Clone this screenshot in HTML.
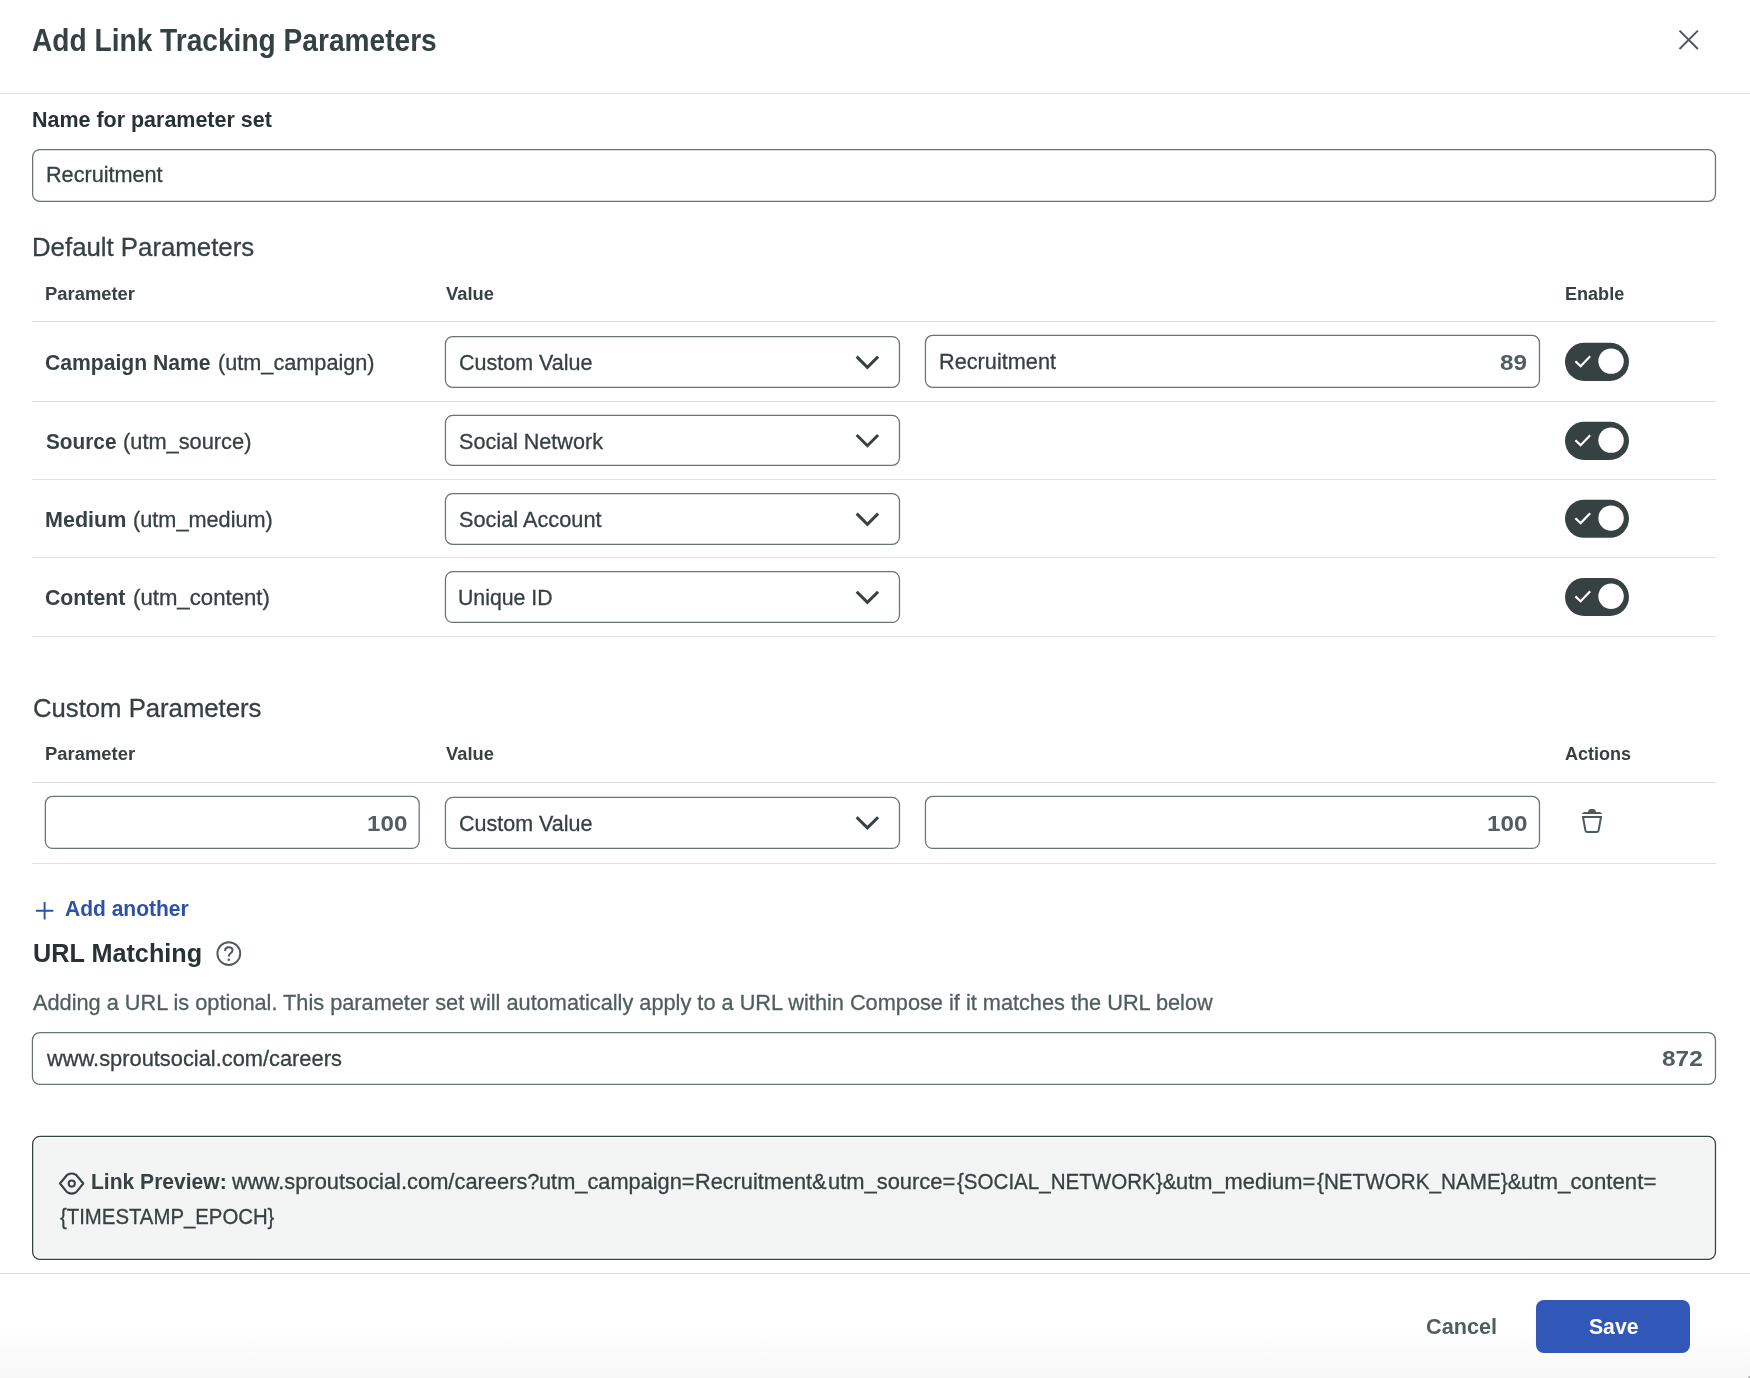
<!DOCTYPE html>
<html><head><meta charset="utf-8"><title>Add Link Tracking Parameters</title>
<style>
html,body{margin:0;padding:0;}
html{width:1750px;height:1378px;overflow:hidden;background:#fff;}
body{width:1750px;height:1378px;position:relative;overflow:hidden;background:#fff;font-family:"Liberation Sans",sans-serif;}
.w{position:absolute;left:0;top:0;width:1750px;height:1378px;will-change:transform;}
.t{position:absolute;white-space:nowrap;display:block;transform-origin:0 0;}
.b{position:absolute;box-sizing:border-box;display:block;}
.g{position:absolute;left:0;top:1328px;width:1750px;height:50px;background:linear-gradient(to bottom,rgba(255,255,255,0) 0%,#f7f7f7 100%);}
</style></head><body>
<div class="g"></div>
<div class="b" style="left:1748px;top:1376px;width:2px;height:2px;background:linear-gradient(135deg,#f0f0f0 0%,#8e8e8e 100%);"></div>
<div class="w">
<span class="t" style="left:32.29px;top:22.00px;font-size:31px;line-height:37px;color:#364141;transform:scaleX(0.9071);font-weight:700;">Add Link Tracking Parameters</span>
<svg class="b" style="left:1673px;top:24px;" width="31" height="31" viewBox="-0.700 -0.800 31.000 31.000"><path d="M5.8 5.8 L24.2 24.2 M24.2 5.8 L5.8 24.2" stroke="#4d5a5b" stroke-width="2" fill="none" stroke-linecap="butt"/></svg>
<div class="b" style="left:0px;top:93.00px;width:1750px;height:1px;background:#dee1e1;"></div>
<span class="t" style="left:32.28px;top:106.00px;font-size:22px;line-height:27px;color:#273333;transform:scaleX(0.9756);font-weight:700;">Name for parameter set</span>
<svg class="b" style="left:30px;top:146px;" width="1689" height="59" viewBox="0 0 1689 59"><rect x="2.62" y="3.52" width="1682.85" height="51.95" rx="7.38" fill="#fff" stroke="#677374" stroke-width="1.25"/></svg>
<span class="t" style="left:46.38px;top:161.00px;font-size:22px;line-height:27px;color:#364141;transform:scaleX(0.9834);-webkit-text-stroke:0.3px;">Recruitment</span>
<span class="t" style="left:32.24px;top:231.00px;font-size:26px;line-height:32px;color:#364141;transform:scaleX(0.9918);-webkit-text-stroke:0.3px;">Default Parameters</span>
<span class="t" style="left:45.29px;top:283.00px;font-size:18px;line-height:22px;color:#364141;transform:scaleX(1.0218);font-weight:700;">Parameter</span>
<span class="t" style="left:445.79px;top:283.00px;font-size:18px;line-height:22px;color:#364141;transform:scaleX(1.0171);font-weight:700;">Value</span>
<span class="t" style="left:1564.96px;top:283.00px;font-size:18px;line-height:22px;color:#364141;transform:scaleX(1.0032);font-weight:700;">Enable</span>
<div class="b" style="left:32px;top:321.00px;width:1684px;height:1px;background:#dee1e1;"></div>
<span class="t" style="left:45.33px;top:349.00px;font-size:22px;line-height:27px;color:#364141;transform:scaleX(0.9606);font-weight:700;">Campaign Name</span>
<span class="t" style="left:217.81px;top:349.00px;font-size:22px;line-height:27px;color:#364141;transform:scaleX(0.9851);-webkit-text-stroke:0.3px;">(utm_campaign)</span>
<svg class="b" style="left:442px;top:333px;" width="461" height="58" viewBox="0 0 461 58"><rect x="3.43" y="3.52" width="454.05" height="50.95" rx="7.38" fill="#fff" stroke="#677374" stroke-width="1.25"/></svg>
<span class="t" style="left:458.98px;top:349.00px;font-size:22px;line-height:27px;color:#364141;transform:scaleX(0.9771);-webkit-text-stroke:0.3px;">Custom Value</span>
<svg class="b" style="left:852px;top:348px;" width="31" height="31" viewBox="-0.400 0.000 31.000 31.000"><path d="M4.3 8.6 L15 19.3 L25.7 8.6" stroke="#364141" stroke-width="3" fill="none" stroke-linecap="butt" stroke-linejoin="miter"/></svg>
<svg class="b" style="left:922px;top:332px;" width="621" height="59" viewBox="0 0 621 59"><rect x="3.43" y="3.32" width="614.05" height="52.15" rx="7.38" fill="#fff" stroke="#677374" stroke-width="1.25"/></svg>
<span class="t" style="left:938.97px;top:348.00px;font-size:22px;line-height:27px;color:#364141;transform:scaleX(0.9868);-webkit-text-stroke:0.3px;">Recruitment</span>
<span class="t" style="left:1500.05px;top:349.00px;font-size:22px;line-height:27px;color:#515e5f;transform:scaleX(1.1047);font-weight:700;">89</span>
<svg class="b" style="left:1562px;top:339px;" width="71" height="45" viewBox="0.000 -0.850 71.000 45.000"><rect x="3" y="2.95" width="64" height="38.1" rx="19.05" fill="#364141"/><circle cx="49.05" cy="21.3" r="12.7" fill="#fff"/><path d="M13.4 21.4 L18.6 26.3 L28.2 16.4" stroke="#fff" stroke-width="2.2" fill="none"/></svg>
<div class="b" style="left:32px;top:401.00px;width:1684px;height:1px;background:#dee1e1;"></div>
<span class="t" style="left:45.62px;top:428.00px;font-size:22px;line-height:27px;color:#364141;transform:scaleX(0.9451);font-weight:700;">Source</span>
<span class="t" style="left:123.00px;top:428.00px;font-size:22px;line-height:27px;color:#364141;transform:scaleX(0.9908);-webkit-text-stroke:0.3px;">(utm_source)</span>
<svg class="b" style="left:442px;top:412px;" width="461" height="56" viewBox="0 0 461 56"><rect x="3.43" y="3.43" width="454.05" height="49.95" rx="7.38" fill="#fff" stroke="#677374" stroke-width="1.25"/></svg>
<span class="t" style="left:459.08px;top:428.00px;font-size:22px;line-height:27px;color:#364141;transform:scaleX(0.9810);-webkit-text-stroke:0.3px;">Social Network</span>
<svg class="b" style="left:852px;top:426px;" width="31" height="31" viewBox="-0.400 -0.400 31.000 31.000"><path d="M4.3 8.6 L15 19.3 L25.7 8.6" stroke="#364141" stroke-width="3" fill="none" stroke-linecap="butt" stroke-linejoin="miter"/></svg>
<svg class="b" style="left:1562px;top:418px;" width="71" height="45" viewBox="0.000 -0.850 71.000 45.000"><rect x="3" y="2.95" width="64" height="38.1" rx="19.05" fill="#364141"/><circle cx="49.05" cy="21.3" r="12.7" fill="#fff"/><path d="M13.4 21.4 L18.6 26.3 L28.2 16.4" stroke="#fff" stroke-width="2.2" fill="none"/></svg>
<div class="b" style="left:32px;top:479.00px;width:1684px;height:1px;background:#dee1e1;"></div>
<span class="t" style="left:44.78px;top:506.00px;font-size:22px;line-height:27px;color:#364141;transform:scaleX(0.9786);font-weight:700;">Medium</span>
<span class="t" style="left:133.01px;top:506.00px;font-size:22px;line-height:27px;color:#364141;transform:scaleX(0.9858);-webkit-text-stroke:0.3px;">(utm_medium)</span>
<svg class="b" style="left:442px;top:490px;" width="461" height="58" viewBox="0 0 461 58"><rect x="3.43" y="3.52" width="454.05" height="50.95" rx="7.38" fill="#fff" stroke="#677374" stroke-width="1.25"/></svg>
<span class="t" style="left:459.07px;top:506.00px;font-size:22px;line-height:27px;color:#364141;transform:scaleX(0.9876);-webkit-text-stroke:0.3px;">Social Account</span>
<svg class="b" style="left:852px;top:505px;" width="31" height="31" viewBox="-0.400 0.000 31.000 31.000"><path d="M4.3 8.6 L15 19.3 L25.7 8.6" stroke="#364141" stroke-width="3" fill="none" stroke-linecap="butt" stroke-linejoin="miter"/></svg>
<svg class="b" style="left:1562px;top:496px;" width="71" height="45" viewBox="0.000 -0.800 71.000 45.000"><rect x="3" y="2.95" width="64" height="38.1" rx="19.05" fill="#364141"/><circle cx="49.05" cy="21.3" r="12.7" fill="#fff"/><path d="M13.4 21.4 L18.6 26.3 L28.2 16.4" stroke="#fff" stroke-width="2.2" fill="none"/></svg>
<div class="b" style="left:32px;top:557.00px;width:1684px;height:1px;background:#dee1e1;"></div>
<span class="t" style="left:45.33px;top:584.00px;font-size:22px;line-height:27px;color:#364141;transform:scaleX(0.9667);font-weight:700;">Content</span>
<span class="t" style="left:132.97px;top:584.00px;font-size:22px;line-height:27px;color:#364141;transform:scaleX(1.0083);-webkit-text-stroke:0.3px;">(utm_content)</span>
<svg class="b" style="left:442px;top:569px;" width="461" height="57" viewBox="0 0 461 57"><rect x="3.43" y="2.73" width="454.05" height="50.75" rx="7.38" fill="#fff" stroke="#677374" stroke-width="1.25"/></svg>
<span class="t" style="left:458.41px;top:584.00px;font-size:22px;line-height:27px;color:#364141;transform:scaleX(0.9674);-webkit-text-stroke:0.3px;">Unique ID</span>
<svg class="b" style="left:852px;top:583px;" width="31" height="31" viewBox="-0.400 -0.100 31.000 31.000"><path d="M4.3 8.6 L15 19.3 L25.7 8.6" stroke="#364141" stroke-width="3" fill="none" stroke-linecap="butt" stroke-linejoin="miter"/></svg>
<svg class="b" style="left:1562px;top:574px;" width="71" height="45" viewBox="0.000 -0.950 71.000 45.000"><rect x="3" y="2.95" width="64" height="38.1" rx="19.05" fill="#364141"/><circle cx="49.05" cy="21.3" r="12.7" fill="#fff"/><path d="M13.4 21.4 L18.6 26.3 L28.2 16.4" stroke="#fff" stroke-width="2.2" fill="none"/></svg>
<div class="b" style="left:32px;top:636.00px;width:1684px;height:1px;background:#dee1e1;"></div>
<span class="t" style="left:32.87px;top:692.00px;font-size:26px;line-height:32px;color:#364141;transform:scaleX(0.9880);-webkit-text-stroke:0.3px;">Custom Parameters</span>
<span class="t" style="left:45.28px;top:743.00px;font-size:18px;line-height:22px;color:#364141;transform:scaleX(1.0229);font-weight:700;">Parameter</span>
<span class="t" style="left:445.79px;top:743.00px;font-size:18px;line-height:22px;color:#364141;transform:scaleX(1.0171);font-weight:700;">Value</span>
<span class="t" style="left:1565.17px;top:743.00px;font-size:18px;line-height:22px;color:#364141;transform:scaleX(1.0023);font-weight:700;">Actions</span>
<div class="b" style="left:32px;top:782.00px;width:1684px;height:1px;background:#dee1e1;"></div>
<svg class="b" style="left:42px;top:793px;" width="380" height="59" viewBox="0 0 380 59"><rect x="3.33" y="3.33" width="373.85" height="52.15" rx="7.38" fill="#fff" stroke="#677374" stroke-width="1.25"/></svg>
<span class="t" style="left:366.70px;top:810.00px;font-size:22px;line-height:27px;color:#515e5f;transform:scaleX(1.0999);font-weight:700;">100</span>
<svg class="b" style="left:442px;top:794px;" width="461" height="58" viewBox="0 0 461 58"><rect x="3.43" y="3.43" width="454.05" height="51.05" rx="7.38" fill="#fff" stroke="#677374" stroke-width="1.25"/></svg>
<span class="t" style="left:458.98px;top:810.00px;font-size:22px;line-height:27px;color:#364141;transform:scaleX(0.9771);-webkit-text-stroke:0.3px;">Custom Value</span>
<svg class="b" style="left:852px;top:808px;" width="31" height="31" viewBox="-0.400 -0.600 31.000 31.000"><path d="M4.3 8.6 L15 19.3 L25.7 8.6" stroke="#364141" stroke-width="3" fill="none" stroke-linecap="butt" stroke-linejoin="miter"/></svg>
<svg class="b" style="left:922px;top:793px;" width="621" height="59" viewBox="0 0 621 59"><rect x="3.43" y="3.33" width="614.05" height="52.15" rx="7.38" fill="#fff" stroke="#677374" stroke-width="1.25"/></svg>
<span class="t" style="left:1486.70px;top:810.00px;font-size:22px;line-height:27px;color:#515e5f;transform:scaleX(1.1028);font-weight:700;">100</span>
<svg class="b" style="left:1577px;top:804px;" width="31" height="35" viewBox="0.000 0.000 31.000 35.000"><path d="M11 8.4 C11 6.2 12.3 5 14 5 H16 C17.7 5 19 6.2 19 8.4 Z" fill="#4d5a5b"/><path d="M4.9 10 L5.9 8.7 Q6.4 8 7.4 8 H22.6 Q23.6 8 24.1 8.7 L25.1 10 Z" fill="#4d5a5b"/><path d="M6 13 H24 L21.6 26.4 C21.4 27.6 20.6 28.1 19.6 28.1 H10.4 C9.4 28.1 8.6 27.6 8.4 26.4 Z" stroke="#4d5a5b" stroke-width="2" fill="none" stroke-linejoin="miter"/></svg>
<div class="b" style="left:32px;top:863.00px;width:1684px;height:1px;background:#dee1e1;"></div>
<svg class="b" style="left:34px;top:900px;" width="23" height="23" viewBox="0.000 0.000 23.000 23.000"><path d="M10.6 2 V19.4 M1.9 10.7 H19.3" stroke="#2b51a8" stroke-width="1.9" fill="none"/></svg>
<span class="t" style="left:64.77px;top:895.00px;font-size:22px;line-height:27px;color:#2b51a8;transform:scaleX(0.9551);font-weight:700;">Add another</span>
<span class="t" style="left:33.34px;top:937.00px;font-size:26px;line-height:32px;color:#273333;transform:scaleX(0.9705);font-weight:700;">URL Matching</span>
<svg class="b" style="left:214px;top:939px;" width="31" height="31" viewBox="0.000 0.000 31.000 31.000"><circle cx="14.8" cy="14.6" r="11.4" stroke="#4d5a5b" stroke-width="1.9" fill="none"/><path d="M11.1 11.9 C11.1 9.5 12.8 8.3 14.8 8.3 C16.9 8.3 18.5 9.6 18.5 11.5 C18.5 14 14.8 14.3 14.8 17.4" stroke="#4d5a5b" stroke-width="2" fill="none"/><circle cx="14.8" cy="20.7" r="1.25" fill="#4d5a5b"/></svg>
<span class="t" style="left:32.96px;top:989.00px;font-size:22px;line-height:27px;color:#515e5f;transform:scaleX(0.9878);-webkit-text-stroke:0.3px;">Adding a URL is optional. This parameter set will automatically apply to a URL within Compose if it matches the URL below</span>
<svg class="b" style="left:29px;top:1030px;" width="1690" height="58" viewBox="0 0 1690 58"><rect x="3.43" y="2.62" width="1683.05" height="51.85" rx="7.38" fill="#fff" stroke="#677374" stroke-width="1.25"/></svg>
<span class="t" style="left:47.39px;top:1045.00px;font-size:22px;line-height:27px;color:#364141;transform:scaleX(0.9924);-webkit-text-stroke:0.3px;">www.sproutsocial.com/careers</span>
<span class="t" style="left:1662.04px;top:1045.00px;font-size:22px;line-height:27px;color:#515e5f;transform:scaleX(1.1091);font-weight:700;">872</span>
<svg class="b" style="left:30px;top:1133px;" width="1689" height="129" viewBox="0 0 1689 129"><rect x="2.65" y="3.45" width="1682.80" height="122.90" rx="7.35" fill="#fff" stroke="#364141" stroke-width="1.3"/><rect x="4.30" y="5.10" width="1679.50" height="119.60" rx="5.70" fill="#f3f4f4"/></svg>
<svg class="b" style="left:57px;top:1170px;" width="31" height="29" viewBox="0.000 0.000 31.000 29.000"><path d="M3 13.5 L9.6 5.5 Q10.3 4.7 11.4 4.3 Q14.65 2.7 17.9 4.3 Q19 4.7 19.7 5.5 L26.3 13.5 L19.7 21.6 Q19 22.4 17.9 22.8 Q14.65 24.5 11.4 22.8 Q10.3 22.4 9.6 21.6 Z" stroke="#364141" stroke-width="2.1" fill="none" stroke-linejoin="round"/><circle cx="14.75" cy="13.56" r="3.1" stroke="#364141" stroke-width="2" fill="none"/></svg>
<span class="t" style="left:90.81px;top:1168.00px;font-size:22px;line-height:27px;color:#364141;transform:scaleX(0.9569);font-weight:700;">Link Preview:</span>
<span class="t" style="left:232.49px;top:1168.00px;font-size:22px;line-height:27px;color:#364141;transform:scaleX(0.9942);-webkit-text-stroke:0.3px;">www.sproutsocial.com/careers?</span>
<span class="t" style="left:539.36px;top:1168.00px;font-size:22px;line-height:27px;color:#364141;transform:scaleX(0.9898);-webkit-text-stroke:0.3px;">utm_campaign=</span>
<span class="t" style="left:695.27px;top:1168.00px;font-size:22px;line-height:27px;color:#364141;transform:scaleX(0.9871);-webkit-text-stroke:0.3px;">Recruitment&amp;</span>
<span class="t" style="left:827.95px;top:1168.00px;font-size:22px;line-height:27px;color:#364141;transform:scaleX(0.9958);-webkit-text-stroke:0.3px;">utm_source=</span>
<span class="t" style="left:957.02px;top:1168.00px;font-size:22px;line-height:27px;color:#364141;transform:scaleX(0.9344);-webkit-text-stroke:0.3px;">{SOCIAL_NETWORK}&amp;</span>
<span class="t" style="left:1176.05px;top:1168.00px;font-size:22px;line-height:27px;color:#364141;transform:scaleX(0.9939);-webkit-text-stroke:0.3px;">utm_medium=</span>
<span class="t" style="left:1317.02px;top:1168.00px;font-size:22px;line-height:27px;color:#364141;transform:scaleX(0.9395);-webkit-text-stroke:0.3px;">{NETWORK_NAME}&amp;</span>
<span class="t" style="left:1521.13px;top:1168.00px;font-size:22px;line-height:27px;color:#364141;transform:scaleX(1.0111);-webkit-text-stroke:0.3px;">utm_content=</span>
<span class="t" style="left:60.42px;top:1203.00px;font-size:22px;line-height:27px;color:#364141;transform:scaleX(0.9246);-webkit-text-stroke:0.3px;">{TIMESTAMP_EPOCH}</span>
<div class="b" style="left:0px;top:1273.00px;width:1750px;height:1px;background:#dee1e1;"></div>
<span class="t" style="left:1425.91px;top:1313.00px;font-size:22px;line-height:27px;color:#515e5f;transform:scaleX(0.9841);font-weight:700;">Cancel</span>
<div class="b" style="left:1536.3px;top:1300px;width:153.7px;height:52.6px;border-radius:8px;background:#3157b8;"></div>
<span class="t" style="left:1588.61px;top:1313.00px;font-size:22px;line-height:27px;color:#fff;transform:scaleX(0.9618);font-weight:700;">Save</span>
</div>
</body></html>
